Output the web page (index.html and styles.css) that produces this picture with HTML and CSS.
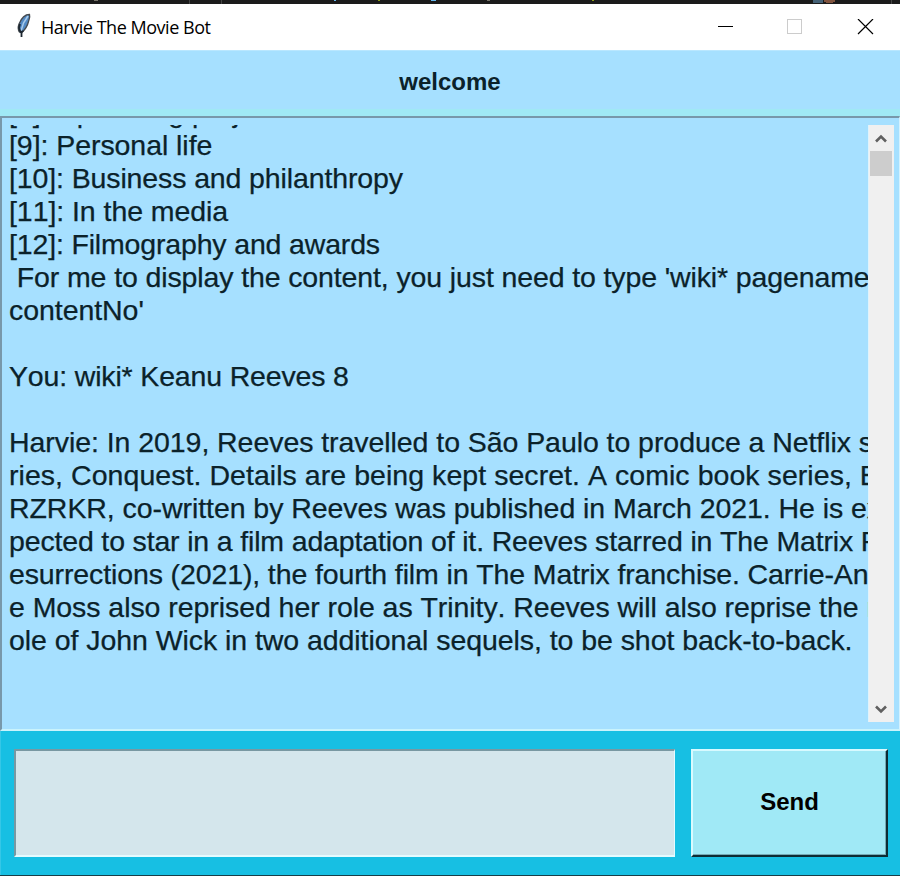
FILE: index.html
```html
<!DOCTYPE html>
<html lang="en">
<head>
<meta charset="utf-8">
<title>Harvie The Movie Bot</title>
<link rel="stylesheet" href="styles.css">
</head>
<body>
<div class="window">
  <div class="backdrop"><svg width="900" height="4" shape-rendering="crispEdges"><path fill="#444" d="M189 0h1v4h-1zM221 0h1v4h-1zM891 0h1v4h-1z"/><path fill="#77746a" d="M94 0h4v1h-4zM487 0h3v1h-3z"/><path fill="#67b7ed" d="M334 0h2v1h-2zM431 0h5v1h-5z"/><path fill="#8c9b16" d="M378 0h2v1h-2zM592 0h2v1h-2z"/><path fill="#456176" d="M813 0h10v3h-10z"/><path fill="#80543f" d="M824 0h11v2h-11zM826 2h7v1h-7z"/></svg></div>
  <header class="titlebar">
    <svg class="feather" width="18" height="26" viewBox="0 0 18 26"><path d="M14.500 1.500C10 1.500 6 6 4 11C2.800 14 3 17 4.500 19L7 19.500C9.500 17 12.500 13 13.500 8.500C14.200 6 15.300 3.500 14.500 1.500Z" fill="#5289c4" stroke="#454b50" stroke-width="1.300"/><path d="M13 3L8.500 10L6 18" fill="none" stroke="#a9cceb" stroke-width="1.500"/><path d="M5 11L4 15L5.500 19L8.500 18M6.500 18v6" fill="none" stroke="#1c2630" stroke-width="1.800"/></svg>
    <h1 class="title">Harvie The Movie Bot</h1>
    <svg class="controls" width="158" height="16" viewBox="0 0 158 16" shape-rendering="crispEdges"><path d="M0 7.500h15" stroke="#000"/><path d="M69.500 .5h14v14h-14z" fill="none" stroke="#ccc"/><path d="M140 0l15 15M155 0l-15 15" stroke="#000" stroke-width="1.200" shape-rendering="auto"/></svg>
  </header>
  <div class="welcome">welcome</div>
  <div class="divider"></div>
  <main class="chat">
    <div class="log">
      <p class="line">[8]: Upcoming projects</p>
      <p class="line">[9]: Personal life</p>
      <p class="line snug">[10]: Business and philanthropy</p>
      <p class="line">[11]: In the media</p>
      <p class="line tight">[12]: Filmography and awards</p>
      <p class="line snug"> For me to display the content, you just need to type 'wiki* pagename</p>
      <p class="line">contentNo'</p>
      <p class="line"></p>
      <p class="line tight">You: wiki* Keanu Reeves 8</p>
      <p class="line"></p>
      <p class="line">Harvie: In 2019, Reeves travelled to São Paulo to produce a Netflix se</p>
      <p class="line loose">ries, Conquest. Details are being kept secret. A comic book series, B</p>
      <p class="line">RZRKR, co-written by Reeves was published in March 2021. He is ex</p>
      <p class="line tight">pected to star in a film adaptation of it. Reeves starred in The Matrix R</p>
      <p class="line snug">esurrections (2021), the fourth film in The Matrix franchise. Carrie-Ann</p>
      <p class="line">e Moss also reprised her role as Trinity. Reeves will also reprise the r</p>
      <p class="line">ole of John Wick in two additional sequels, to be shot back-to-back.</p>
    </div>
    <div class="scrollbar">
      <svg class="arrow" width="12" height="9" viewBox="0 0 12 9"><path d="M1 7.500L6 2.500L11 7.500" fill="none" stroke="#606060" stroke-width="2.600"/></svg>
      <div class="thumb"></div>
      <svg class="arrow down" width="12" height="9" viewBox="0 0 12 9"><path d="M1 1.500L6 6.500L11 1.500" fill="none" stroke="#606060" stroke-width="2.600"/></svg>
    </div>
  </main>
  <footer class="composer">
    <div class="entry"></div>
    <button class="send">Send</button>
  </footer>
  <div class="bottom-edge"></div>
</div>
</body>
</html>
```
FILE: styles.css
```css
* { box-sizing: border-box; }
body { margin: 0; font-family: "Liberation Sans", Arial, sans-serif; }
.window { width: 900px; height: 876px; display: flex; flex-direction: column; overflow: hidden; background: #a6e0ff; }
.backdrop { height: 4px; background: #1b1b1b; }
.backdrop svg { display: block; }
.titlebar { height: 46px; display: flex; align-items: flex-start; background: #fff; padding: 9px 24px 0 15px; }
.title { margin: 2px auto 0 8px; font: 400 18px/24px "Open Sans", "Noto Sans", sans-serif; letter-spacing: -.47px; color: #000; }
.controls { margin: 6px 0 0; }
.welcome { height: 59px; border-top: 1px solid #b9e7ff; font-weight: 700; font-size: 24px; line-height: 62px; text-align: center; color: #0b222a; }
.divider { height: 7px; background: #a0e9f5; }
.chat { height: 615px; display: flex; padding: 7px 4px 7px 7px; border: 2px solid; border-color: #7898aa #d4f2ff #c9f3fc #7898aa; border-width: 2px 1px 2px 2px; }
.log { width: 859px; overflow: hidden; color: #0b222a; font-kerning: none; -webkit-text-stroke: .25px #0b222a; }
.line { margin: 0; height: 33px; line-height: 33px; font-size: 28.5px; letter-spacing: -.06px; white-space: pre; }
.line:first-child { margin-top: -29px; }
.loose { letter-spacing: .05px; }
.snug { letter-spacing: -.12px; }
.tight { letter-spacing: -.16px; }
.scrollbar { width: 26px; height: 597px; display: flex; flex-direction: column; align-items: center; background: #f0f0f0; border-left: 1px solid #dff3fc; padding-right: 1px; }
.arrow { margin: 9px 0 8px; flex: none; }
.thumb { width: 22px; height: 25px; background: #cdcdcd; }
.down { margin: auto 0 8px; }
.composer { flex: 1; display: flex; gap: 16px; padding: 18px 12px 18px 13px; background: #17bfe3; border-left: 1px solid #35c7e7; }
.entry { width: 661px; background: #d4e6ec; border: 2px solid; border-color: #7898a2 #e5fbff #e5fbff #7898a2; border-width: 2px 1px 2px 2px; }
.send { width: 197px; padding: 0 0 2px; background: #a0e9f6; border: 2px solid; border-color: #d8faff #0d2c35 #0d2c35 #d8faff; box-shadow: inset -1px -1px #75a9b4; font: 700 24px "Liberation Sans", Arial, sans-serif; color: #000; }
.bottom-edge { height: 1px; background: #183e47; }
```
